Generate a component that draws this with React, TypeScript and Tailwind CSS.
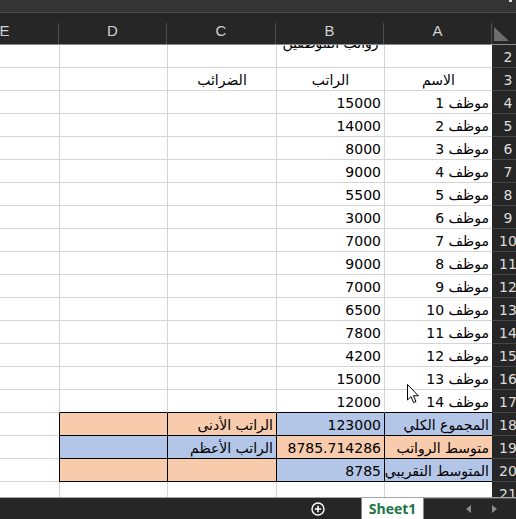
import React from 'react';

const ORANGE = 'bg-[#f8cbad]';
const BLUE = 'bg-[#b4c6e7]';

type CellData = {
  text?: string;
  bg?: string;
  center?: boolean;
};

type RowData = {
  n: number;
  cells: CellData[]; // A, B, C, D, E
  blackTop?: boolean;
  boxed?: boolean;
  title?: boolean;
};

const salaries = [15000, 14000, 8000, 9000, 5500, 3000, 7000, 9000, 7000, 6500, 7800, 4200, 15000, 12000];

const rows: RowData[] = [
  { n: 2, cells: [{}, {}, {}, {}, {}], title: true },
  {
    n: 3,
    cells: [
      { text: 'الاسم', center: true },
      { text: 'الراتب', center: true },
      { text: 'الضرائب', center: true },
      {},
      {},
    ],
  },
  ...salaries.map((s, i) => ({
    n: i + 4,
    cells: [{ text: `موظف ${i + 1}` }, { text: String(s) }, {}, {}, {}],
    blackTop: i === salaries.length - 1,
  })),
  {
    n: 18,
    boxed: true,
    cells: [
      { text: 'المجموع الكلي', bg: BLUE },
      { text: '123000', bg: BLUE },
      { text: 'الراتب الأدنى', bg: ORANGE },
      { bg: ORANGE },
      {},
    ],
  },
  {
    n: 19,
    boxed: true,
    cells: [
      { text: 'متوسط الرواتب', bg: ORANGE },
      { text: '8785.714286', bg: ORANGE },
      { text: 'الراتب الأعظم', bg: BLUE },
      { bg: BLUE },
      {},
    ],
  },
  {
    n: 20,
    boxed: true,
    cells: [
      { text: 'المتوسط التقريبي', bg: BLUE },
      { text: '8785', bg: BLUE },
      { bg: ORANGE },
      { bg: ORANGE },
      {},
    ],
  },
  { n: 21, cells: [{}, {}, {}, {}, {}] },
];

const widths = ['w-[108px]', 'w-[108px]', 'w-[109px]', 'w-[108px]', 'w-[108px]'];
const letters = ['A', 'B', 'C', 'D', 'E'];

const SheetRow = ({ row }: { row: RowData }) => (
  <div className="flex shrink-0 h-[23px]" dir="rtl">
    <div className="w-[32px] shrink-0 -mr-2 bg-[#262626] border-b border-[#454545] flex items-end justify-center pb-[2px] text-[14px] leading-4 text-[#dcdcdc]">
      {row.n}
    </div>
    {row.cells.map((c, i) => {
      const inBox = i < 4;
      const bottomBlack = inBox && (row.boxed || row.blackTop);
      const leftBlack = inBox && row.boxed;
      return (
        <div
          key={i}
          className={`${widths[i]} shrink-0 relative flex items-end px-[3px] pb-[2px] text-[14px] leading-4 text-black whitespace-nowrap border-b border-l ${
            bottomBlack ? 'border-b-black' : 'border-b-[#d4d4d4]'
          } ${leftBlack ? 'border-l-black' : 'border-l-[#d4d4d4]'} ${c.bg ?? 'bg-white'} ${
            c.center ? 'justify-center' : 'justify-start'
          }`}
        >
          {row.title && i === 1 && (
            <span className="absolute top-[-10px] left-0 right-0 text-center leading-4">رواتب الموظفين</span>
          )}
          {c.text}
        </div>
      );
    })}
  </div>
);

export default function App() {
  return (
    <div
      className="w-[516px] h-[519px] overflow-hidden bg-white flex flex-col relative"
      style={{ fontFamily: '"DejaVu Sans", "Liberation Sans", sans-serif' }}
    >
      {/* top strip */}
      <div className="h-[12px] bg-[#353535] shrink-0 flex justify-end">
        <div className="w-[3px] h-[2px] bg-[#e0e0e0] mr-[4px]" />
      </div>
      <div className="h-px bg-[#4a4a4a] shrink-0" />

      {/* column headers */}
      <div className="h-[32px] shrink-0 flex bg-[#262626] border-b border-[#8a8a8a]" dir="rtl">
        <div className="w-[32px] shrink-0 -mr-2 relative">
          <svg width="32" height="31" className="absolute left-0 top-0">
            <polygon points="2,14 2,28 17,28" fill="#6e6e6e" />
          </svg>
        </div>
        {letters.map((l, i) => (
          <div key={l} className={`${widths[i]} shrink-0 flex items-end`}>
            <div className="w-px h-[21px] bg-[#4e4e4e] shrink-0" />
            <div
              className="flex-1 h-full flex items-center justify-center pt-[6px] text-[15px] text-[#d2d2d2]"
              style={{ fontFamily: '"Liberation Sans", sans-serif' }}
            >
              {l}
            </div>
          </div>
        ))}
      </div>

      {/* grid body */}
      <div className="flex-1 overflow-hidden flex flex-col relative">
        {rows.map((r) => (
          <SheetRow key={r.n} row={r} />
        ))}
        {/* mouse pointer */}
        <svg width="13" height="20" viewBox="0 0 13 20" className="absolute left-[407px] top-[339px]">
          <path d="M0.5 0.5 L0.5 16 L4 12.6 L6.6 18.6 L9 17.6 L6.5 11.8 L11.4 11.8 Z" fill="#fff" stroke="#000" strokeWidth="1" strokeLinejoin="round" />
        </svg>
      </div>

      {/* sheet tabs bar */}
      <div className="h-[22px] shrink-0 flex bg-[#262626] border-t border-[#a6a6a6]">
        <div className="w-[361px] shrink-0 flex items-center justify-end pr-[36px]">
          <svg width="14" height="14" viewBox="0 0 14 14">
            <circle cx="7" cy="7" r="6" fill="none" stroke="#ffffff" strokeWidth="1.4" />
            <path d="M7 3.8 V10.2 M3.8 7 H10.2" stroke="#ffffff" strokeWidth="1.6" />
          </svg>
        </div>
        <div
          className="w-[63px] shrink-0 bg-white border-x border-[#8a8a8a] flex items-center justify-center text-[14px] font-bold text-[#217346]"
          style={{ fontFamily: '"Open Sans", "Liberation Sans", sans-serif' }}
        >
          Sheet1
        </div>
        <div className="flex-1 flex items-center justify-end gap-[21px] pr-[19px] border-t border-[#555]">
          <svg width="5" height="8" viewBox="0 0 5 8">
            <polygon points="5,0 5,8 0,4" fill="#8c8c8c" />
          </svg>
          <svg width="5" height="8" viewBox="0 0 5 8">
            <polygon points="0,0 0,8 5,4" fill="#8c8c8c" />
          </svg>
        </div>
      </div>
    </div>
  );
}
